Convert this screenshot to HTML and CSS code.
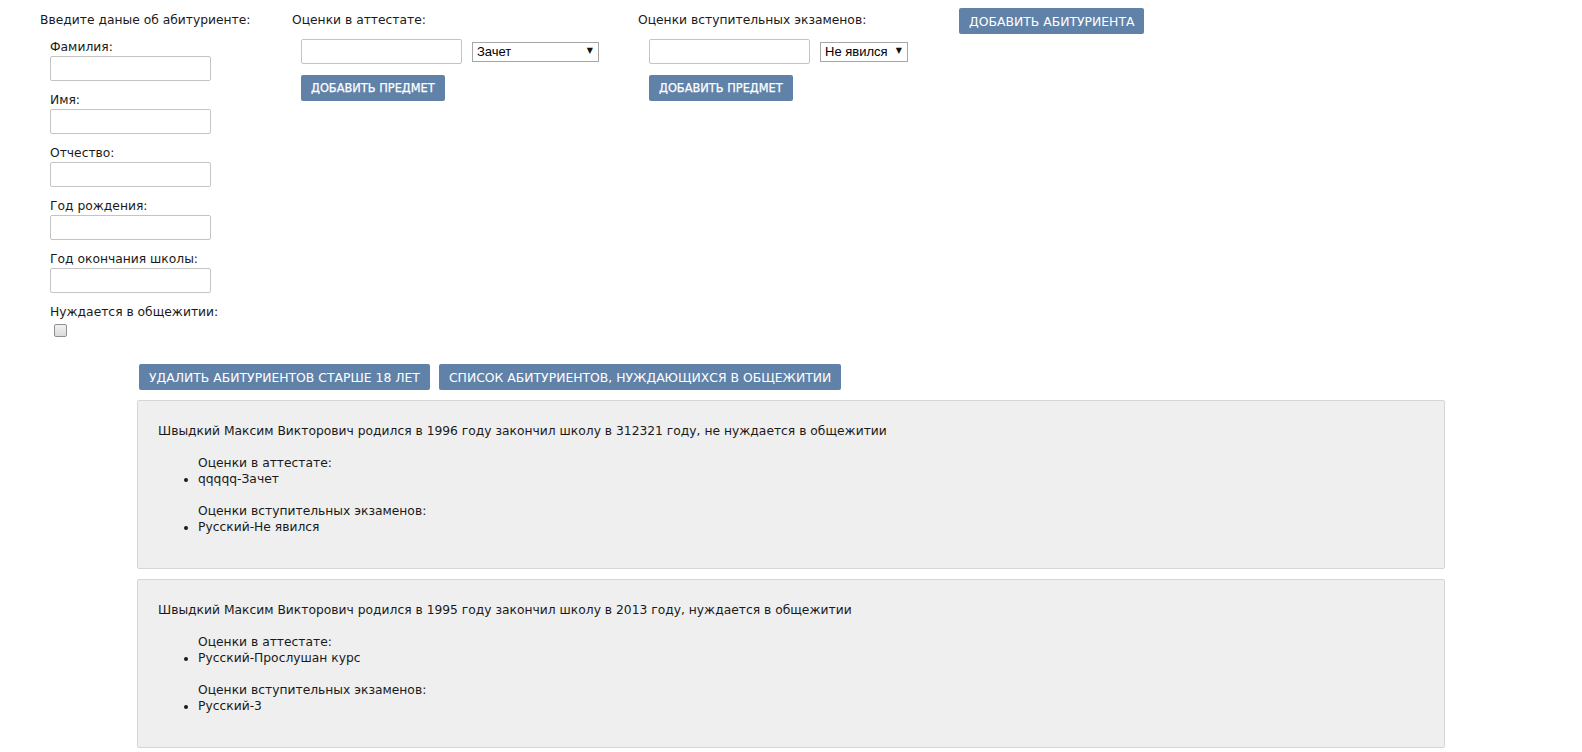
FILE: index.html
```html
<!DOCTYPE html>
<html lang="ru">
<head>
  <meta charset="UTF-8" />
  <meta name="viewport" content="width=device-width, initial-scale=1.0" />
  <title>Абитуриенты</title>
  <link rel="stylesheet" href="styles.css">
</head>
<body>
  <div class="top">
    <div class="col col-person">
      <div class="col-title">Введите даные об абитуриенте:</div>
      <div class="fields">
        <label class="field">Фамилия:<input type="text" /></label>
        <label class="field">Имя:<input type="text" /></label>
        <label class="field">Отчество:<input type="text" /></label>
        <label class="field">Год рождения:<input type="text" /></label>
        <label class="field">Год окончания школы:<input type="text" /></label>
        <label class="field field-check">Нуждается в общежитии:<input type="checkbox" /></label>
      </div>
    </div>

    <div class="col col-marks">
      <div class="col-title">Оценки в аттестате:</div>
      <div class="subject">
        <div class="subject-row">
          <input type="text" />
          <span class="select-wrap select-wide">
            <select>
              <option>Зачет</option>
              <option>Прослушан курс</option>
              <option>5</option>
              <option>4</option>
              <option>3</option>
            </select>
          </span>
        </div>
        <button type="button" class="btn btn-small">Добавить предмет</button>
      </div>
    </div>

    <div class="col col-exams">
      <div class="col-title">Оценки вступительных экзаменов:</div>
      <div class="subject">
        <div class="subject-row">
          <input type="text" />
          <span class="select-wrap">
            <select>
              <option>Не явился</option>
              <option>5</option>
              <option>4</option>
              <option>3</option>
              <option>2</option>
            </select>
          </span>
        </div>
        <button type="button" class="btn btn-small">Добавить предмет</button>
      </div>
    </div>

    <div class="col col-add">
      <button type="button" class="btn">Добавить абитуриента</button>
    </div>
  </div>

  <div class="list">
    <div class="actions">
      <button type="button" class="btn">Удалить абитуриентов старше 18 лет</button>
      <button type="button" class="btn">Список абитуриентов, нуждающихся в общежитии</button>
    </div>

    <div class="entrant">
      <p>Швыдкий Максим Викторович родился в 1996 году закончил школу в 312321 году, не нуждается в общежитии</p>
      <ul>Оценки в аттестате:
        <li>qqqqq-Зачет</li>
      </ul>
      <ul>Оценки вступительных экзаменов:
        <li>Русский-Не явился</li>
      </ul>
    </div>

    <div class="entrant">
      <p>Швыдкий Максим Викторович родился в 1995 году закончил школу в 2013 году, нуждается в общежитии</p>
      <ul>Оценки в аттестате:
        <li>Русский-Прослушан курс</li>
      </ul>
      <ul>Оценки вступительных экзаменов:
        <li>Русский-3</li>
      </ul>
    </div>
  </div>
</body>
</html>
```

FILE: styles.css
```css
body {
  margin: 0;
  font-family: "DejaVu Sans", Tahoma, sans-serif;
  font-size: 12.3px;
  line-height: 16px;
  color: #1a1a1a;
  background: #fff;
}

/* верхняя форма */
.top { display: flex; align-items: flex-start; padding: 12px 0 0 40px; }
.col-person { width: 252px; }
.col-marks { width: 346px; }
.col-exams { width: 321px; }
.col-add { margin-top: -4px; }
.col-title { line-height: 17px; }

.fields { padding: 10px 0 0 10px; }
.field { display: block; line-height: 17px; margin-bottom: 11px; }
.field input[type="text"] { display: block; }
.field-check { margin-bottom: 0; }
.field-check input {
  -webkit-appearance: none;
  appearance: none;
  display: block;
  box-sizing: border-box;
  margin: 3px 3px 3px 4px;
  width: 13px;
  height: 13px;
  border: 1px solid #8f8f8f;
  border-radius: 2px;
  background: linear-gradient(#f0f0f0, #dcdcdc);
}

input[type="text"] {
  box-sizing: border-box;
  width: 161px;
  height: 25px;
  margin: 0;
  border: 1px solid #c4c4c4;
  border-radius: 2px;
  font: inherit;
  padding: 2px 4px;
}

.subject { padding: 10px 0 0 9px; }
.col-exams .subject { padding-left: 11px; }
.subject-row { display: flex; align-items: center; gap: 10px; }

.select-wrap { position: relative; display: inline-block; }
.select-wrap select {
  -webkit-appearance: none;
  appearance: none;
  box-sizing: border-box;
  height: 20px;
  width: 88px;
  margin: 0;
  padding: 0 16px 0 4px;
  border: 1px solid #a6a6a6;
  border-radius: 0;
  background: #fff;
  font-family: "Liberation Sans", Arial, sans-serif;
  font-size: 13px;
  color: #000;
}
.select-wide select { width: 127px; }
.select-wrap::after {
  content: "▼";
  position: absolute;
  right: 6px;
  top: 4px;
  font-size: 8px;
  line-height: 10px;
  color: #111;
  pointer-events: none;
}

.btn {
  height: 26px;
  padding: 0 10px;
  border: none;
  border-radius: 2px;
  background: #6182a8;
  color: #fff;
  font-family: "DejaVu Sans", Tahoma, sans-serif;
  font-size: 12.4px;
  text-transform: uppercase;
  cursor: pointer;
}
.btn:hover { background: #4f6f95; }
.btn-small { margin-top: 11px; font-size: 11.4px; -webkit-text-stroke: 0.25px #fff; }

/* список абитуриентов */
.list { width: 1308px; margin: 24px auto 0; }
.actions { display: flex; gap: 9px; padding-left: 2px; margin-bottom: 10px; }

.entrant {
  border: 1px solid #d6d6d6;
  border-radius: 2px;
  background: #efefef;
  padding: 6px 20px 17px;
  margin-bottom: 10px;
}
.entrant p { margin: 16px 0; }
.entrant ul { margin: 16px 0; padding-left: 40px; }
```
